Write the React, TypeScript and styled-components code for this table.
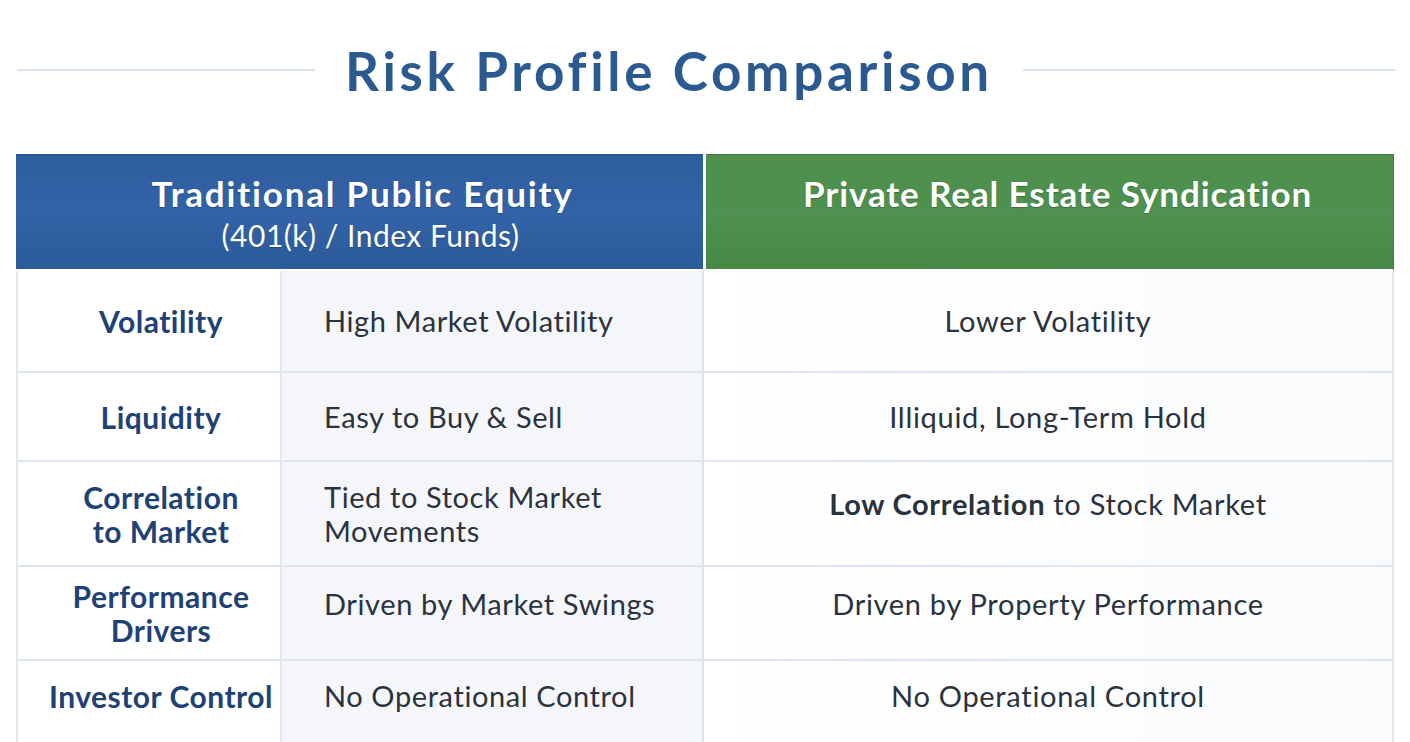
import React from "react";
import styled, { createGlobalStyle, css } from "styled-components";

const Global = createGlobalStyle`
  html, body { margin: 0; padding: 0; background: #ffffff; overflow: hidden; }
  body { font-family: "Lato", "Open Sans", sans-serif; }
`;

const Page = styled.div`
  width: 1410px;
  height: 742px;
  padding: 0 14px 0 16px;
  box-sizing: border-box;
  background: #fff;
`;

const TitleBar = styled.div`
  display: flex;
  align-items: center;
  gap: 30px;
  height: 154px;
  padding-bottom: 14px;
  box-sizing: border-box;
  padding-left: 1px;
`;

const Rule = styled.div<{ $width?: number }>`
  flex: ${(p) => (p.$width ? `0 0 ${p.$width}px` : "1")};
  height: 2px;
  background: #dbe3ee;
`;

const Title = styled.h1`
  margin: 0;
  font-family: "Lato", sans-serif;
  font-weight: 700;
  font-size: 53px;
  letter-spacing: 3.7px;
  color: #2b5a91;
  white-space: nowrap;
`;

const Table = styled.div`
  display: grid;
  grid-template-columns: 266px 422px 690px;
  grid-template-rows: 117px 102px 89px 105px 94px 100px;
`;

const Head = styled.div<{ $green?: boolean }>`
  grid-column: ${(p) => (p.$green ? "3" : "1 / span 2")};
  background: ${(p) =>
    p.$green
      ? "linear-gradient(180deg, #4d8f4b 0%, #4e9150 50%, #478a47 100%)"
      : "linear-gradient(180deg, #2e5d9f 0%, #3363a6 50%, #2c5b9c 100%)"};
  border-top: 1px solid ${(p) => (p.$green ? "#3f7a3f" : "#28528c")};
  border-bottom: 2px solid #ffffff;
  ${(p) =>
    p.$green
      ? css`
          margin-left: 2px;
          border-right: 1px solid #3f7a3f;
          padding-left: 16px;
        `
      : css`
          margin-right: 1px;
          padding-left: 6px;
        `}
  display: flex;
  flex-direction: column;
  align-items: center;
  padding-top: 18px;
  box-sizing: border-box;
  color: #ffffff;
  text-shadow: 0 1px 1px rgba(0, 0, 0, 0.25);
`;

const HeadTitle = styled.div<{ $spacing: number }>`
  font-weight: 700;
  font-size: 35px;
  line-height: 40px;
  letter-spacing: ${(p) => p.$spacing}px;
`;

const HeadSub = styled.div`
  font-weight: 400;
  font-size: 30px;
  line-height: 44px;
  letter-spacing: 0.5px;
  padding-left: 16px;
`;

const Cell = styled.div<{ $kind: "label" | "value" | "right"; $shift?: number }>`
  display: flex;
  align-items: center;
  box-sizing: border-box;
  border-bottom: 2px solid #dfe5ee;
  padding-bottom: ${(p) => p.$shift ?? 0}px;
  ${(p) =>
    p.$kind === "label" &&
    css`
      justify-content: center;
      text-align: center;
      padding-left: 24px;
      border-left: 2px solid #e3e8f0;
      border-right: 2px solid #e3e8f0;
      background: #ffffff;
      color: #1e4176;
      font-weight: 700;
      font-size: 30px;
      line-height: 34px;
      letter-spacing: 0.5px;
    `}
  ${(p) =>
    p.$kind === "value" &&
    css`
      padding-left: 42px;
      background: #f4f6fa;
      color: #2a323e;
      font-weight: 400;
      font-size: 29px;
      line-height: 34px;
      letter-spacing: 0.6px;
      border-right: 2px solid #dde3ec;
    `}
  ${(p) =>
    p.$kind === "right" &&
    css`
      justify-content: center;
      text-align: center;
      background: linear-gradient(90deg, #ffffff 0%, #fafbfd 100%);
      color: #2a323e;
      font-weight: 400;
      font-size: 29px;
      line-height: 34px;
      letter-spacing: 0.7px;
      border-right: 2px solid #e3e8f0;
    `}
`;

const Strong = styled.b`
  font-weight: 700;
`;

type Row = {
  label: React.ReactNode;
  value: React.ReactNode;
  right: React.ReactNode;
  labelShift?: number;
  valueShift?: number;
  rightShift?: number;
};

const rows: Row[] = [
  { label: "Volatility", value: "High Market Volatility", right: "Lower Volatility" },
  { label: "Liquidity", value: "Easy to Buy & Sell", right: "Illiquid, Long-Term Hold" },
  {
    label: (
      <>
        Correlation
        <br />
        to Market
      </>
    ),
    value: (
      <>
        Tied to Stock Market
        <br />
        Movements
      </>
    ),
    right: (
      <>
        <Strong>Low Correlation</Strong> to Stock Market
      </>
    ),
    rightShift: 20,
  },
  {
    label: (
      <>
        Performance
        <br />
        Drivers
      </>
    ),
    value: "Driven by Market Swings",
    right: "Driven by Property Performance",
    valueShift: 18,
    rightShift: 18,
  },
  {
    label: "Investor Control",
    value: "No Operational Control",
    right: "No Operational Control",
    labelShift: 28,
    valueShift: 28,
    rightShift: 28,
  },
];

export default function App() {
  return (
    <>
      <Global />
      <Page>
        <TitleBar>
          <Rule $width={298} />
          <Title>Risk Profile Comparison</Title>
          <Rule />
        </TitleBar>
        <Table>
          <Head>
            <HeadTitle $spacing={1.8}>Traditional Public Equity</HeadTitle>
            <HeadSub>(401(k) / Index Funds)</HeadSub>
          </Head>
          <Head $green>
            <HeadTitle $spacing={0.9}>Private Real Estate Syndication</HeadTitle>
          </Head>
          {rows.map((r, i) => (
            <React.Fragment key={i}>
              <Cell $kind="label" $shift={r.labelShift}>
                <span>{r.label}</span>
              </Cell>
              <Cell $kind="value" $shift={r.valueShift}>
                <span>{r.value}</span>
              </Cell>
              <Cell $kind="right" $shift={r.rightShift}>
                <span>{r.right}</span>
              </Cell>
            </React.Fragment>
          ))}
        </Table>
      </Page>
    </>
  );
}
